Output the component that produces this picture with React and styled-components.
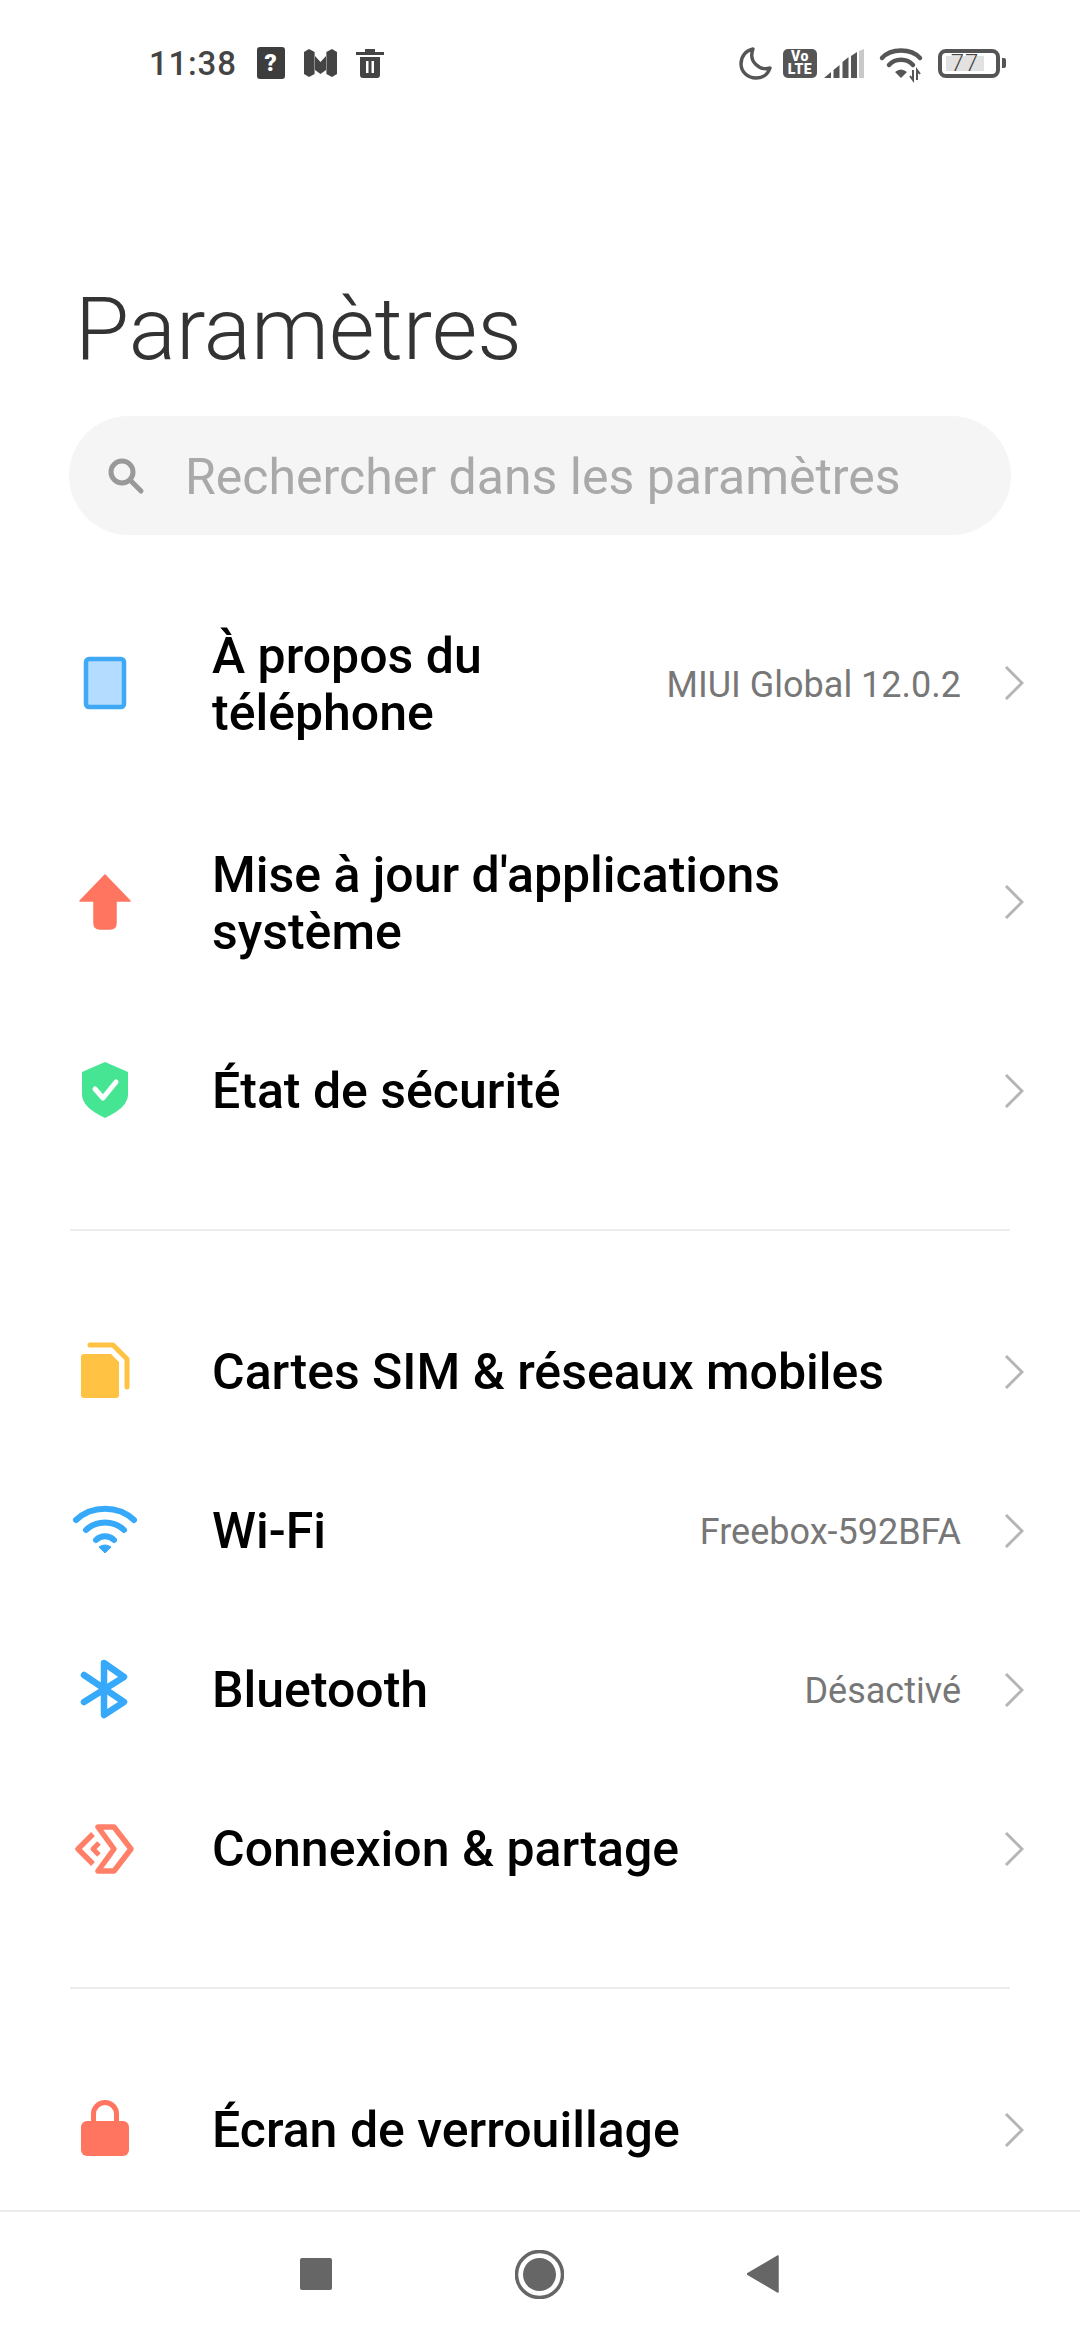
import React from 'react';
import styled, { createGlobalStyle } from 'styled-components';

const GlobalStyle = createGlobalStyle`
  html, body {
    margin: 0;
    padding: 0;
    background: #fff;
    font-family: Roboto, "Noto Sans", sans-serif;
  }
`;

const Page = styled.div`
  width: 1080px;
  height: 2340px;
  display: flex;
  flex-direction: column;
  overflow: hidden;
  background: #fff;
`;

const Content = styled.main`
  flex: 1;
  min-height: 0;
  overflow: hidden;
`;

/* status bar */
const StatusBar = styled.header`
  height: 126px;
  padding: 0 74px 0 149px;
  display: flex;
  align-items: center;
  justify-content: space-between;
  color: #444;
`;

const StatusGroup = styled.div`
  display: flex;
  align-items: center;
`;

const Time = styled.span`
  font-size: 33px;
  font-weight: 500;
  letter-spacing: 0.8px;
  color: #444;
  margin-right: 20px;
`;

const StatusSvg = styled.svg`
  display: block;
  margin-left: ${(p) => p.$left || 0}px;
  overflow: visible;
`;

const HelpBadge = styled.span`
  width: 28px;
  height: 32px;
  border-radius: 3px;
  background: #3d3d3d;
  color: #fff;
  font-size: 24px;
  font-weight: 900;
  line-height: 32px;
  text-align: center;
`;

const VolteBadge = styled.span`
  width: 34px;
  height: 29px;
  margin-left: 11px;
  border-radius: 5px;
  background: #555;
  color: #fff;
  font-size: 14px;
  font-weight: 900;
  letter-spacing: 0.5px;
  line-height: 13px;
  text-align: center;
  display: flex;
  flex-direction: column;
  justify-content: center;
`;

const Battery = styled.div`
  display: flex;
  align-items: center;
  margin-left: 15px;
`;

const BatteryBody = styled.div`
  box-sizing: border-box;
  width: 62px;
  height: 29px;
  padding: 3px 4px;
  border: 4px solid #555;
  border-radius: 8px;
  display: flex;
`;

const BatteryLevel = styled.div`
  width: 38px;
  height: 100%;
  background: #e2e2e2;
  color: #444;
  font-size: 24px;
  font-weight: 300;
  letter-spacing: 1px;
  line-height: 15px;
  text-align: center;
  white-space: nowrap;
`;

const BatteryNub = styled.div`
  width: 4px;
  height: 10px;
  margin-left: 2px;
  border-radius: 0 2px 2px 0;
  background: #555;
`;

/* heading + search */
const Title = styled.h1`
  margin: 0;
  height: 290px;
  padding: 141px 0 0 75px;
  box-sizing: border-box;
  font-size: 88px;
  font-weight: 300;
  line-height: 124px;
  color: #333;
`;

const SearchBar = styled.div`
  margin: 0 69px;
  height: 119px;
  padding-left: 38px;
  display: flex;
  align-items: center;
  gap: 40px;
  border-radius: 60px;
  background: #f5f5f5;
  font-size: 50px;
  color: #a9a9a9;
`;

const SearchText = styled.span`
  padding-top: 3px;
`;

/* settings list */
const Group = styled.section`
  padding: ${(p) => p.$top || 0}px 0 59px;
`;

const Divider = styled.hr`
  margin: 0 70px;
  height: 2px;
  border: 0;
  background: #ececec;
`;

const Row = styled.div`
  height: ${(p) => (p.$tall ? 219 : 159)}px;
  padding: 0 56px 0 70px;
  display: flex;
  align-items: center;
`;

const IconSlot = styled.svg`
  flex: none;
  width: 70px;
  height: 70px;
  margin-right: 72px;
`;

const Label = styled.div`
  flex: 1;
  padding-top: ${(p) => (p.$tall ? 5 : 2)}px;
  font-size: 50px;
  font-weight: 500;
  line-height: 57px;
  color: #000;
`;

const Value = styled.div`
  font-size: 36px;
  color: #777;
  white-space: nowrap;
  margin-right: 43px;
  padding-top: ${(p) => (p.$tall ? 5 : 2)}px;
`;

const Chevron = styled.svg`
  flex: none;
  width: 20px;
  height: 36px;
  fill: none;
  stroke: #b5b5b5;
  stroke-width: 3;
`;

/* navigation bar */
const NavBar = styled.nav`
  flex: none;
  height: 130px;
  box-sizing: border-box;
  padding: 46px 0 0 300px;
  border-top: 2px solid #ececec;
  display: flex;
  align-items: flex-start;
  gap: 183px;
  background: #fff;
`;

const NavIcon = styled.svg`
  display: block;
  fill: #666;
  margin-top: ${(p) => p.$up || 0}px;
`;

const PhoneIcon = () => (
  <IconSlot viewBox="0 0 70 70">
    <rect x="16" y="11" width="38" height="48" rx="3" fill="#b3dcff" stroke="#3fa9f5" strokeWidth="4.5" />
  </IconSlot>
);

const ArrowIcon = () => (
  <IconSlot viewBox="0 0 70 70">
    <path d="M35 8 L60 34 H46 V56 Q46 62 40 62 H30 Q24 62 24 56 V34 H10 Z" fill="#ff7560" stroke="#ff7560" strokeWidth="1.5" strokeLinejoin="round" />
  </IconSlot>
);

const ShieldIcon = () => (
  <IconSlot viewBox="0 0 70 70">
    <path d="M35 6 L58 16 V38 C58 50 45 57 35 62 C25 57 12 50 12 38 V16 Z" fill="#46e594" />
    <path d="M25 33 L33 42 L46 26" fill="none" stroke="#fff" strokeWidth="5" strokeLinecap="round" strokeLinejoin="round" />
  </IconSlot>
);

const SimIcon = () => (
  <IconSlot viewBox="0 0 70 70">
    <path d="M14 17 H41 L49 25 V58 Q49 61 46 61 H14 Q11 61 11 58 V20 Q11 17 14 17 Z" fill="#ffc243" />
    <path d="M20 8 H43 L57 22 V50" fill="none" stroke="#ffc243" strokeWidth="5" strokeLinecap="round" strokeLinejoin="round" />
  </IconSlot>
);

const WifiIcon = () => (
  <IconSlot viewBox="0 0 70 70">
    <g fill="none" stroke="#37a9fb" strokeWidth="6" strokeLinecap="round">
      <path d="M6 24 C22 9 48 9 64 24" />
      <path d="M16 34 C26 24 44 24 54 34" />
      <path d="M26 44 C31 39 39 39 44 44" />
    </g>
    <path d="M35 57 L29 51 Q35 47 41 51 Z" fill="#37a9fb" stroke="#37a9fb" strokeWidth="1" strokeLinejoin="round" />
  </IconSlot>
);

const BluetoothIcon = () => (
  <IconSlot viewBox="0 0 70 70">
    <path d="M14 20 L54 47 L34 60 V8 L54 22 L14 47" fill="none" stroke="#37a9fb" strokeWidth="6.5" strokeLinecap="round" strokeLinejoin="round" />
  </IconSlot>
);

const ShareIcon = () => (
  <IconSlot viewBox="0 0 70 70">
    <g fill="none" stroke="#ff7f68" strokeLinejoin="round">
      <path d="M28 13 H44 L61 35 L44 57 H28 L44 35 Z" strokeWidth="5.5" />
      <path d="M23 20 L8 35 L23 50" strokeWidth="5.5" />
      <path d="M29 29 L23 35 L29 41" strokeWidth="5" />
    </g>
  </IconSlot>
);

const LockIcon = () => (
  <IconSlot viewBox="0 0 70 70">
    <path d="M23.5 28 V19 A11.5 11.5 0 0 1 46.5 19 V28" fill="none" stroke="#ff7560" strokeWidth="5" />
    <rect x="11" y="26" width="48" height="35" rx="6" fill="#ff7560" />
  </IconSlot>
);

const SettingRow = ({ icon, value, tall, children }) => (
  <Row $tall={tall}>
    {icon}
    <Label $tall={tall}>{children}</Label>
    {value && <Value $tall={tall}>{value}</Value>}
    <Chevron viewBox="0 0 20 36">
      <path d="M2 2 L18 18 L2 34" />
    </Chevron>
  </Row>
);

export default function App() {
  return (
    <Page>
      <GlobalStyle />
      <Content>
        <StatusBar>
          <StatusGroup>
            <Time>11:38</Time>
            <HelpBadge>?</HelpBadge>
            <StatusSvg $left={19} width="33" height="28" viewBox="0 0 33 28" fill="#444">
              <path d="M0 3 L5 0 L10.6 3 V25 L5 28 L0 25 Z" />
              <path d="M22.4 3 L28 0 L33 3 V25 L28 28 L22.4 25 Z" />
              <path d="M11 7 L16.5 13 L22 7 V21 L16.5 25 L11 21 Z" />
            </StatusSvg>
            <StatusSvg $left={19} width="28" height="30" viewBox="0 0 28 30" fill="#444">
              <path d="M0 4 H9 V1 H19 V4 H28 V7 H0 Z" />
              <path fillRule="evenodd" d="M4 9 H24 V27 Q24 30 21 30 H7 Q4 30 4 27 Z M10 13 V25 H12.5 V13 Z M15.5 13 V25 H18 V13 Z" />
            </StatusSvg>
          </StatusGroup>
          <StatusGroup>
            <StatusSvg width="33" height="33" viewBox="0 0 33 33" fill="none" stroke="#555" strokeWidth="3.4" strokeLinejoin="round">
              <path d="M14 2 C6 4 2 10 2 17 C2 25 9 31 17 31 C24 31 29 27 31 21 C21 24 9 15 14 2 Z" />
            </StatusSvg>
            <VolteBadge>
              <span>Vo</span>
              <span>LTE</span>
            </VolteBadge>
            <StatusSvg $left={7} width="40" height="29" viewBox="0 0 40 29">
              <path d="M0 29 L7 23 V29 Z" fill="#555" />
              <path d="M9.5 21 L15.5 16 V29 H9.5 Z" fill="#555" />
              <path d="M18.5 13 L24.5 8 V29 H18.5 Z" fill="#555" />
              <path d="M27 7 L33 3 V29 H27 Z" fill="#555" />
              <path d="M35 2 L40 0 V29 H35 Z" fill="#c9c9c9" />
            </StatusSvg>
            <StatusSvg $left={16} width="43" height="33" viewBox="0 0 43 33">
              <g fill="none" stroke="#555" strokeWidth="4.4" strokeLinecap="round">
                <path d="M2 11 C11 1 31 1 40 11" />
                <path d="M9 18 C15 11 27 11 33 18" />
              </g>
              <path d="M21 31 L15 25 Q21 20 27 25 Z" fill="#555" />
              <path d="M33 23 V33 L30 29 M37 33 V23 L40 27" fill="none" stroke="#555" strokeWidth="2" />
            </StatusSvg>
            <Battery>
              <BatteryBody>
                <BatteryLevel>77</BatteryLevel>
              </BatteryBody>
              <BatteryNub />
            </Battery>
          </StatusGroup>
        </StatusBar>

        <Title>Paramètres</Title>

        <SearchBar>
          <svg width="38" height="38" viewBox="0 0 38 38" fill="none" stroke="#999" strokeWidth="5" strokeLinecap="round">
            <circle cx="15" cy="15" r="11" />
            <path d="M24 24 L34 34" />
          </svg>
          <SearchText>Rechercher dans les paramètres</SearchText>
        </SearchBar>

        <Group $top={38}>
          <SettingRow tall icon={<PhoneIcon />} value="MIUI Global 12.0.2">
            À propos du<br />téléphone
          </SettingRow>
          <SettingRow tall icon={<ArrowIcon />}>
            Mise à jour d'applications<br />système
          </SettingRow>
          <SettingRow icon={<ShieldIcon />}>État de sécurité</SettingRow>
        </Group>
        <Divider />
        <Group $top={61}>
          <SettingRow icon={<SimIcon />}>Cartes SIM &amp; réseaux mobiles</SettingRow>
          <SettingRow icon={<WifiIcon />} value="Freebox-592BFA">Wi-Fi</SettingRow>
          <SettingRow icon={<BluetoothIcon />} value="Désactivé">Bluetooth</SettingRow>
          <SettingRow icon={<ShareIcon />}>Connexion &amp; partage</SettingRow>
        </Group>
        <Divider />
        <Group $top={61}>
          <SettingRow icon={<LockIcon />}>Écran de verrouillage</SettingRow>
        </Group>
      </Content>

      <NavBar>
        <NavIcon width="32" height="32" viewBox="0 0 32 32">
          <rect width="32" height="32" rx="2" />
        </NavIcon>
        <NavIcon $up={-8} width="49" height="49" viewBox="0 0 49 49">
          <circle cx="24.5" cy="24.5" r="23" fill="none" stroke="#666" strokeWidth="3.5" />
          <circle cx="24.5" cy="24.5" r="16.5" />
        </NavIcon>
        <NavIcon $up={-3} width="32" height="38" viewBox="2 0 32 38">
          <path d="M33 1 V37 L2 19 Z" stroke="#666" strokeWidth="1.5" strokeLinejoin="round" />
        </NavIcon>
      </NavBar>
    </Page>
  );
}
